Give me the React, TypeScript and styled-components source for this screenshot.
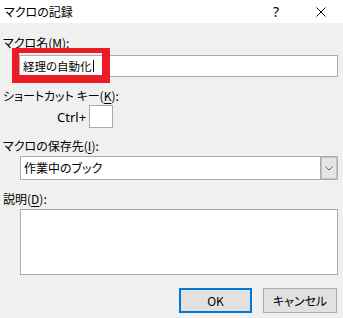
import React from 'react';
import styled, { createGlobalStyle } from 'styled-components';

const GlobalStyle = createGlobalStyle`
  html, body {
    margin: 0;
    padding: 0;
  }
  body {
    background: #f0f0f0;
    font-family: "Noto Sans CJK JP", "Noto Sans", sans-serif;
    font-size: 12px;
    color: #000;
    font-feature-settings: "palt";
  }
`;

const Dialog = styled.div`
  width: 343px;
  height: 318px;
  background: #f0f0f0;
  overflow: hidden;
`;

const TitleBar = styled.div`
  display: flex;
  align-items: center;
  height: 23px;
  padding-left: 4px;
  background: #fff;
`;

const Title = styled.span`
  flex: 1;
  line-height: 23px;
`;

const HelpButton = styled.span`
  width: 12px;
  margin-right: 34px;
  text-align: center;
  font-family: "Noto Sans", sans-serif;
  font-size: 14px;
`;

const CloseButton = styled.span`
  display: flex;
  width: 10px;
  height: 10px;
  margin-right: 17px;
`;

const Body = styled.div`
  padding: 12px 5px 0 3px;
`;

const Label = styled.div<{ $mt: number }>`
  margin-top: ${(p) => p.$mt}px;
  height: 15px;
  line-height: 15px;

  u {
    text-decoration-thickness: 1px;
    text-underline-offset: 2px;
  }
`;

const FieldWrap = styled.div<{ $mt: number; $ml: number }>`
  position: relative;
  margin-top: ${(p) => p.$mt}px;
  margin-left: ${(p) => p.$ml}px;
`;

const TextBox = styled.div`
  display: flex;
  align-items: center;
  box-sizing: border-box;
  height: 22px;
  padding-left: 3px;
  background: #fff;
  border: 1px solid #ababab;
  font-size: 11.5px;
`;

const Caret = styled.span`
  display: inline-block;
  width: 1px;
  height: 12px;
  margin-left: 1px;
  background: #000;
`;

const Highlight = styled.div`
  position: absolute;
  left: -7px;
  top: -7px;
  box-sizing: border-box;
  width: 98px;
  height: 35px;
  border-style: solid;
  border-color: #ed1c24;
  border-width: 5px 8px 8px 7px;
  pointer-events: none;
`;

const ShortcutRow = styled.div`
  display: flex;
  align-items: center;
  margin-top: 2px;
  margin-left: 54px;
`;

const CtrlText = styled.span`
  font-family: "Noto Sans", sans-serif;
  font-size: 13px;
`;

const KeyBox = styled.div`
  box-sizing: border-box;
  width: 24px;
  height: 23px;
  margin-left: 3px;
  background: #fff;
  border: 1px solid #ababab;
`;

const Select = styled.div`
  display: flex;
  box-sizing: border-box;
  height: 24px;
  background: #fff;
  border: 1px solid #ababab;
`;

const SelectValue = styled.span`
  flex: 1;
  padding-left: 3px;
  line-height: 22px;
`;

const DropButton = styled.div`
  display: flex;
  align-items: center;
  justify-content: center;
  box-sizing: border-box;
  width: 17px;
  background: #e5e5e5;
  border-left: 1px solid #ababab;
  box-shadow: inset 0 0 0 1px #c4c4c4;
`;

const TextArea = styled.div`
  box-sizing: border-box;
  height: 66px;
  background: #fff;
  border: 1px solid #ababab;
`;

const ButtonRow = styled.div`
  display: flex;
  justify-content: flex-end;
  gap: 11px;
  margin-top: 13px;
  margin-right: 1px;
`;

const DialogButton = styled.button<{ $primary?: boolean }>`
  box-sizing: border-box;
  width: ${(p) => (p.$primary ? 73 : 74)}px;
  height: 25px;
  padding: 0;
  background: #e1e1e1;
  border: ${(p) => (p.$primary ? '2px solid #0078d7' : '1px solid #adadad')};
  font-family: "Noto Sans CJK JP", "Noto Sans", sans-serif;
  font-size: 12px;
  font-feature-settings: "palt";
  color: #000;
`;

const App = () => {
  return (
    <Dialog>
      <GlobalStyle />
      <TitleBar>
        <Title>マクロの記録</Title>
        <HelpButton>?</HelpButton>
        <CloseButton>
          <svg width="10" height="10" viewBox="0 0 10 10">
            <path d="M0.5 0.5 L9.5 9.5 M9.5 0.5 L0.5 9.5" stroke="#000" strokeWidth="1" />
          </svg>
        </CloseButton>
      </TitleBar>
      <Body>
        <Label $mt={0}>
          マクロ名(<u>M</u>):
        </Label>
        <FieldWrap $mt={5} $ml={16}>
          <TextBox>
            経理の自動化
            <Caret />
          </TextBox>
          <Highlight />
        </FieldWrap>
        <Label $mt={11}>
          ショートカット キー(<u>K</u>):
        </Label>
        <ShortcutRow>
          <CtrlText>Ctrl+</CtrlText>
          <KeyBox />
        </ShortcutRow>
        <Label $mt={10}>
          マクロの保存先(<u>I</u>):
        </Label>
        <FieldWrap $mt={3} $ml={17}>
          <Select>
            <SelectValue>作業中のブック</SelectValue>
            <DropButton>
              <svg width="8" height="5" viewBox="0 0 8 5">
                <path d="M0.5 0.5 L4 4 L7.5 0.5" stroke="#606060" strokeWidth="1" fill="none" />
              </svg>
            </DropButton>
          </Select>
        </FieldWrap>
        <Label $mt={11}>
          説明(<u>D</u>):
        </Label>
        <FieldWrap $mt={3} $ml={17}>
          <TextArea />
        </FieldWrap>
        <ButtonRow>
          <DialogButton $primary>OK</DialogButton>
          <DialogButton>キャンセル</DialogButton>
        </ButtonRow>
      </Body>
    </Dialog>
  );
};

export default App;
